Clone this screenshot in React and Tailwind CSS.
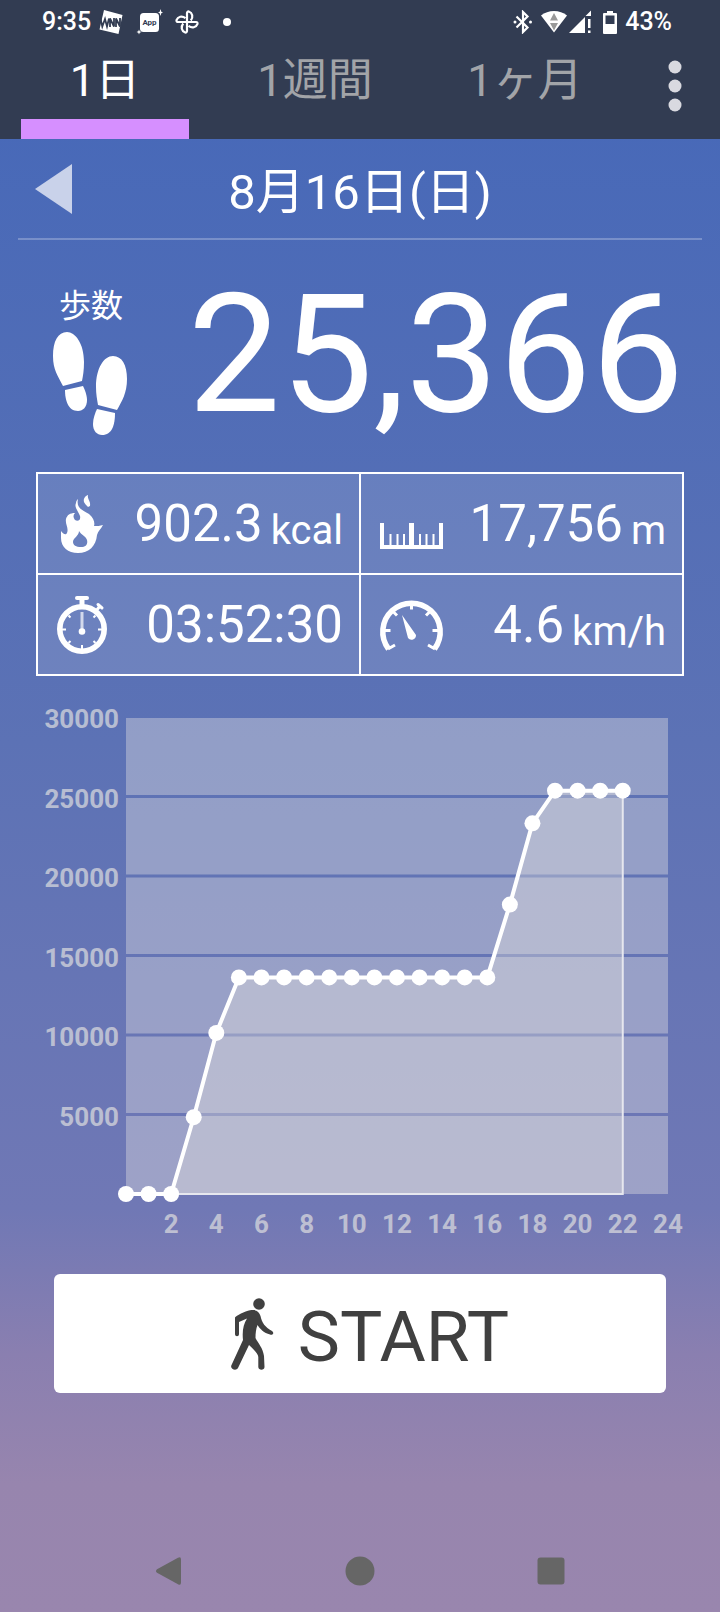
import { useState } from "react";

const TABS = ["1日", "1週間", "1ヶ月"];

const HOURLY_STEPS = [
  0, 0, 0, 4830, 10130, 13620, 13620, 13620, 13620, 13620, 13620, 13620, 13620,
  13620, 13620, 13620, 13620, 18200, 23310, 25366, 25366, 25366, 25366,
];

function StatusBar() {
  return (
    <div className="flex h-11 items-center justify-between pl-[42px] pr-12 text-[25px] font-medium">
      <div className="flex items-center">
        <span>9:35</span>
        <svg className="ml-2 h-6 w-6" viewBox="0 0 24 24" aria-hidden="true">
          <path d="M5 0L23.500 5L19.500 24L.5 19.500Z" fill="#fff" />
          <path
            d="M1.500 8.500l1.800 8L6 9l2 7.500L10 8.500M11 17V8.500l4 8V8M17 17V8.500l4 8V8"
            fill="none"
            stroke="#323c52"
            strokeWidth="1.800"
          />
        </svg>
        <svg className="ml-3.5 h-[26px] w-[26px] overflow-visible" viewBox="0 0 26 26" aria-hidden="true">
          <rect x="3" y="4" width="19" height="19" rx="3.500" fill="#fff" />
          <path d="M23.500 0l.8 2.700 1.700.8-1.700.8-.8 2.700-.8-2.700-1.700-.8 1.700-.8z" fill="#fff" />
          <path d="M2 20.500l.7 1.800 1.800.7-1.800.7L2 25.500l-.7-1.800L-.5 23l1.800-.7z" fill="#fff" />
          <text x="12.500" y="16" textAnchor="middle" fontSize="8" fontWeight="700" fill="#323c52">
            App
          </text>
        </svg>
        <svg
          className="ml-3 h-6 w-6"
          viewBox="0 0 24 24"
          fill="none"
          stroke="#fff"
          strokeWidth="2.200"
          strokeLinejoin="round"
          aria-hidden="true"
        >
          {[0, 90, 180, 270].map((angle) => (
            <path
              key={angle}
              d="M12 12V3A1.500 1.500 0 0 1 13.800 1.500C17.500 2.800 18.500 7 15.800 10.500"
              transform={`rotate(${angle} 12 12)`}
            />
          ))}
        </svg>
        <span className="ml-6 h-2 w-2 rounded-full bg-white" />
      </div>
      <div className="flex items-center">
        <svg className="h-6 w-5" viewBox="0 0 20 24" aria-hidden="true">
          <path
            d="M3.500 6.500l11 11L10 22V2l4.500 4.500-11 11"
            fill="none"
            stroke="#fff"
            strokeWidth="2.200"
          />
          <circle cx="2" cy="12" r="1.500" fill="#fff" />
          <circle cx="17.500" cy="12" r="1.500" fill="#fff" />
        </svg>
        <svg className="ml-2 h-6 w-[26px]" viewBox="0 0 26 24" aria-hidden="true">
          <path d="M0 5.500C7-.5 19-.5 26 5.500L13 22.500Z" fill="#fff" />
          <path d="M13 3l4 7.500H9zM9 13h8l-4 7.500z" fill="#999" />
        </svg>
        <svg className="ml-0.5 h-6 w-[22px]" viewBox="0 0 22 24" aria-hidden="true">
          <path d="M0 23L16 7V23ZM16.500 6L22 .5V6Z" fill="#fff" />
          <path d="M19 9h2.500v9H19zM19 20.500h2.500V23H19z" fill="#fff" />
        </svg>
        <svg className="ml-3 h-6 w-[14px]" viewBox="0 0 14 24" aria-hidden="true">
          <path
            d="M4 1h6v2h3a1 1 0 0 1 1 1v19a1 1 0 0 1-1 1H1a1 1 0 0 1-1-1V4a1 1 0 0 1 1-1h3z"
            fill="#fff"
          />
          <path d="M2.500 5.500h9V14h-9z" fill="#323c52" />
        </svg>
        <span className="ml-2">43%</span>
      </div>
    </div>
  );
}

function TabBar({ active, onChange }) {
  return (
    <nav className="flex h-[95px]">
      {TABS.map((label) => (
        <button
          key={label}
          type="button"
          onClick={() => onChange(label)}
          className="flex flex-1 flex-col items-stretch justify-between px-[21px] text-[45px] leading-[74px]"
        >
          <span className={label === active ? "text-white" : "text-[#a2a4a8]"}>{label}</span>
          <span className={label === active ? "h-5 bg-[#d68fff]" : "h-5"} />
        </button>
      ))}
      <button type="button" aria-label="メニュー" className="flex w-[90px] justify-center pt-4">
        <svg className="h-[52px] w-4" viewBox="0 0 16 52" fill="#d9d9e0">
          <circle cx="8" cy="7" r="6.500" />
          <circle cx="8" cy="26" r="6.500" />
          <circle cx="8" cy="45" r="6.500" />
        </svg>
      </button>
    </nav>
  );
}

function FootprintsIcon() {
  return (
    <svg className="h-[104px] w-[76px]" viewBox="0 0 76 104" fill="#fff" aria-hidden="true">
      <path d="M14 0C22 0 31 11 31 30C31 38 30 44 29 49L10 54C5 44 0 38 0 24C0 9 5 0 14 0Z" />
      <path d="M12 58L30 54C33 60 34 65 34 68C34 75 30 79 25 79C15 79 12 68 12 58Z" />
      <path d="M60 24C69 24 74 33 74 47C74 61 69 69 64 78L45 73C44 67 43 62 43 55C43 36 51 24 60 24Z" />
      <path d="M44 77L62 81C62 93 59 103 49 103C44 103 40 99 40 92C40 87 42 81 44 77Z" />
    </svg>
  );
}

function FlameIcon() {
  return (
    <svg className="h-[58px] w-[43px]" viewBox="0 0 43 58" aria-hidden="true">
      <path
        fill="#fff"
        fillRule="evenodd"
        d="M17 4C15 13 21 15 28 19C33 23 34 28 33 31C36 31 39 31 42 30C40 34 37 36 36 40C35 51 28 58 17 58C7 58 0 52 0 43V36C3 40 5 40 6 38C8 33 4 29 5 24C6 20 9 18 14 18C12 20 12 22 14 25C17 27 20 25 19 21C17 16 13 12 15 8C15 6 16 5 17 4ZM18 36C18 41 12 43 12 47C12 50 15 52 20 52C25 52 27 49 26 45C25 41 20 40 18 36Z"
      />
      <path fill="#fff" d="M27 0C26 4 30 6 29 11L27 12C24 9 21 6 24 2C25 1 26 0 27 0Z" />
    </svg>
  );
}

function StopwatchIcon() {
  return (
    <svg className="h-[58px] w-[50px]" viewBox="0 0 50 58" fill="none" stroke="#fff" aria-hidden="true">
      <circle cx="25" cy="33" r="22.200" strokeWidth="5.600" />
      <path d="M25 2V10" strokeWidth="5" />
      <path d="M20 2H30" strokeWidth="4" strokeLinecap="round" />
      <path d="M39 15L43 10" strokeWidth="3" />
      <path d="M41 8.500L45 12" strokeWidth="3" strokeLinecap="round" />
      <path
        d="M5 33.500H9M41 33.500H45M25 53V49M11.500 19.500L13.500 21.500M38.500 19.500L36.500 21.500M11.500 47L13.500 45M38.500 47L36.500 45"
        strokeWidth="2"
      />
      <path d="M25 16V34" strokeWidth="3" strokeOpacity=".7" />
      <circle cx="25" cy="35.500" r="3.300" fill="#fff" stroke="none" />
    </svg>
  );
}

function RulerIcon() {
  return (
    <svg className="mt-6 h-[26px] w-[63px]" viewBox="0 0 63 26" fill="none" stroke="#fff" aria-hidden="true">
      <path d="M2 0V24H61V0" strokeWidth="4" />
      <path d="M31.500 0V24" strokeWidth="5" />
      <path d="M10.500 11V24M17.500 11V24M24 11V24M40 11V24M46.500 11V24M53.500 11V24" strokeWidth="2" />
    </svg>
  );
}

function GaugeIcon() {
  return (
    <svg className="h-[52px] w-[63px] overflow-visible" viewBox="0 0 63 52" fill="none" stroke="#fff" aria-hidden="true">
      <path d="M8.500 50A28.700 28.700 0 1 1 54.500 50" strokeWidth="5.500" />
      <path
        d="M31.500 5V10.500M4 31.500H10.500M59 31.500H52.500M13 12.500L17 16.500M50 12.500L46 16.500M8 50L15 46M55 50L48 46"
        strokeWidth="3"
      />
      <path d="M22 16L36 36A4.500 4.500 0 0 1 28 39Z" fill="#fff" stroke="none" />
    </svg>
  );
}

function Stat({ icon, value, unit }) {
  return (
    <div className="flex h-[99px] flex-1 items-center justify-between bg-white/12 pl-[19px] pr-4">
      <div className="flex min-w-[50px] justify-center">{icon}</div>
      <div className="flex items-end gap-2 whitespace-nowrap">
        <span className="text-[51px] leading-[60px]">{value}</span>
        {unit ? <span className="text-[40px] leading-[46px]">{unit}</span> : null}
      </div>
    </div>
  );
}

const hourX = (h) => 126 + h * 22.58;
const stepY = (v) => 494 - v * 0.0159;

function StepsChart() {
  const points = HOURLY_STEPS.map((v, h) => `${hourX(h)},${stepY(v)}`);
  const lastX = hourX(HOURLY_STEPS.length - 1);

  return (
    <svg className="block w-full" viewBox="0 0 720 550" role="img" aria-label="歩数グラフ">
      {[0, 1, 2, 3, 4, 5].map((i) => {
        const top = i === 5 ? 18 : stepY((i + 1) * 5000) + 1.5;
        const bottom = i === 0 ? 494 : stepY(i * 5000) - 1.5;
        return (
          <rect
            key={i}
            x="126"
            y={top}
            width="542"
            height={bottom - top}
            fill="#e3e0e4"
            fillOpacity=".4"
          />
        );
      })}
      <polygon
        points={`${points.join(" ")} ${lastX},494`}
        fill="#e8e5e0"
        fillOpacity=".36"
      />
      <path d={`M${hourX(2)} 494H${lastX}V${stepY(25366)}`} fill="none" stroke="#e6e7ee" strokeWidth="2" />
      <polyline points={points.join(" ")} fill="none" stroke="#fff" strokeWidth="4" />
      {HOURLY_STEPS.map((v, h) => (
        <circle key={h} cx={hourX(h)} cy={stepY(v)} r="8" fill="#fff" />
      ))}
      <g fill="#e0e0e0" fillOpacity=".7" fontSize="26" fontWeight="700">
        {[5000, 10000, 15000, 20000, 25000, 30000].map((v) => (
          <text key={v} x="119" y={stepY(v) + 11} textAnchor="end">
            {v}
          </text>
        ))}
        {[2, 4, 6, 8, 10, 12, 14, 16, 18, 20, 22, 24].map((h) => (
          <text key={h} x={hourX(h)} y="533" textAnchor="middle">
            {h}
          </text>
        ))}
      </g>
    </svg>
  );
}

function WalkIcon() {
  return (
    <svg className="h-[72px] w-[43px]" viewBox="0 0 43 72" fill="#404040" aria-hidden="true">
      <circle cx="28" cy="6" r="5.800" />
      <path d="M4 19.500C5 18 14 13 19 12.300C25 11.500 28 13 29.500 18C31 25 34 29 41 33C43.500 34.500 42 37.500 39 36.500C33 35 29 31 26.500 27C25 31 24.500 35 24.500 40C27 45 32 50 33 58L33.500 69C33.500 72.500 27.500 72.500 27.300 69V59C27 55 21 50 18 47L7 70C5 73.500-1 71 .3 67.500L12 42C11 33 12.500 26 16 20.500L8 24V36C8 39 4 39 4 36Z" />
    </svg>
  );
}

export default function App() {
  const [tab, setTab] = useState("1日");

  return (
    <div className="flex min-h-screen flex-col bg-[linear-gradient(#4869b8_8%,#5c72b5_46%,#7078b5_75%,#8a7fb0_84%,#9785ae_92%,#9986ae)] font-[Roboto,'Noto_Sans_CJK_JP',sans-serif] text-white">
      <header className="bg-[#323c52]">
        <StatusBar />
        <TabBar active={tab} onChange={setTab} />
      </header>

      <main className="flex flex-col">
        <div className="mx-[18px] flex h-[101px] items-center border-b-2 border-white/25">
          <button type="button" aria-label="前の日" className="w-[72px] pl-[17px]">
            <svg className="h-[50px] w-[37px]" viewBox="0 0 37 50">
              <path d="M37 0V50L0 25Z" fill="#c9d2ea" />
            </svg>
          </button>
          <h1 className="flex-1 pt-2 text-center text-[49px] leading-[72px]">8月16日(日)</h1>
          <div className="w-[72px]" />
        </div>

        <section className="flex items-center justify-between px-9 pt-[33px]">
          <div className="flex w-[110px] flex-col items-center pt-3">
            <h2 className="text-[32px] leading-[40px]">歩数</h2>
            <div className="mt-1.5">
              <FootprintsIcon />
            </div>
          </div>
          <p className="text-[165px] leading-[164px]">25,366</p>
        </section>

        <section className="mx-9 mt-[35px] divide-y-2 divide-white border-2 border-white">
          <div className="flex divide-x-2 divide-white">
            <Stat icon={<FlameIcon />} value="902.3" unit="kcal" />
            <Stat icon={<RulerIcon />} value="17,756" unit="m" />
          </div>
          <div className="flex divide-x-2 divide-white">
            <Stat icon={<StopwatchIcon />} value="03:52:30" />
            <Stat icon={<GaugeIcon />} value="4.6" unit="km/h" />
          </div>
        </section>

        <section className="mt-6">
          <StepsChart />
        </section>

        <button
          type="button"
          className="mx-[54px] mt-6 flex h-[119px] items-center justify-center gap-6 rounded-md bg-white pl-5 text-[71px] leading-[80px] text-[#404040]"
        >
          <WalkIcon />
          <span className="pt-1.5">START</span>
        </button>
      </main>

      <nav className="mt-auto flex h-[83px] items-center justify-center gap-[162px]">
        <button type="button" aria-label="戻る">
          <svg className="h-[30px] w-[28px]" viewBox="0 0 28 30">
            <path d="M26 3.500V26.500Q26 30 23 28.300L2 16.800Q0 15 2 13.200L23 1.700Q26 0 26 3.500Z" fill="#666" />
          </svg>
        </button>
        <button type="button" aria-label="ホーム">
          <svg className="h-[30px] w-[30px]" viewBox="0 0 30 30">
            <circle cx="15" cy="15" r="14.500" fill="#666" />
          </svg>
        </button>
        <button type="button" aria-label="最近のアプリ">
          <svg className="h-[28px] w-[28px]" viewBox="0 0 28 28">
            <rect x="0.500" y="0.500" width="27" height="27" rx="3" fill="#666" />
          </svg>
        </button>
      </nav>
    </div>
  );
}
